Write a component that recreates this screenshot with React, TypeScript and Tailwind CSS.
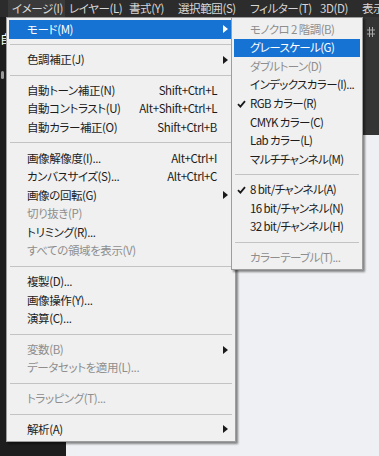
import React from "react";

type Item =
  | "sep"
  | {
      label: string;
      shortcut?: string;
      sub?: boolean;
      disabled?: boolean;
      active?: boolean;
      checked?: boolean;
    };

const mainItems: Item[] = [
  { label: "モード(M)", sub: true, active: true },
  "sep",
  { label: "色調補正(J)", sub: true },
  "sep",
  { label: "自動トーン補正(N)", shortcut: "Shift+Ctrl+L" },
  { label: "自動コントラスト(U)", shortcut: "Alt+Shift+Ctrl+L" },
  { label: "自動カラー補正(O)", shortcut: "Shift+Ctrl+B" },
  "sep",
  { label: "画像解像度(I)...", shortcut: "Alt+Ctrl+I" },
  { label: "カンバスサイズ(S)...", shortcut: "Alt+Ctrl+C" },
  { label: "画像の回転(G)", sub: true },
  { label: "切り抜き(P)", disabled: true },
  { label: "トリミング(R)..." },
  { label: "すべての領域を表示(V)", disabled: true },
  "sep",
  { label: "複製(D)..." },
  { label: "画像操作(Y)..." },
  { label: "演算(C)..." },
  "sep",
  { label: "変数(B)", sub: true, disabled: true },
  { label: "データセットを適用(L)...", disabled: true },
  "sep",
  { label: "トラッピング(T)...", disabled: true },
  "sep",
  { label: "解析(A)", sub: true },
];

const modeItems: Item[] = [
  { label: "モノクロ 2 階調(B)", disabled: true },
  { label: "グレースケール(G)", active: true },
  { label: "ダブルトーン(D)", disabled: true },
  { label: "インデックスカラー(I)..." },
  { label: "RGB カラー(R)", checked: true },
  { label: "CMYK カラー(C)" },
  { label: "Lab カラー(L)" },
  { label: "マルチチャンネル(M)" },
  "sep",
  { label: "8 bit/チャンネル(A)", checked: true },
  { label: "16 bit/チャンネル(N)" },
  { label: "32 bit/チャンネル(H)" },
  "sep",
  { label: "カラーテーブル(T)...", disabled: true },
];

const menuBar = [
  { label: "イメージ(I)", w: "w-[57px]", open: true },
  { label: "レイヤー(L)", w: "w-[60px]" },
  { label: "書式(Y)", w: "w-[49px]" },
  { label: "選択範囲(S)", w: "w-[72px]" },
  { label: "フィルター(T)", w: "w-[70px]" },
  { label: "3D(D)", w: "w-[42px]" },
  { label: "表示", w: "w-[30px]" },
];

const Arrow = ({ light }: { light?: boolean }) => (
  <svg width="5" height="8" viewBox="0 0 5 8">
    <polygon points="0,0 5,4 0,8" fill={light ? "#ffffff" : "#1a1a1a"} />
  </svg>
);

const Check = () => (
  <svg width="9" height="8" viewBox="0 0 9 8">
    <polyline points="1,4.2 3.4,6.6 8,1.2" fill="none" stroke="#1a1a1a" strokeWidth="1.8" />
  </svg>
);

const Separator = () => (
  <div className="h-[12px] mx-[3px] flex items-center">
    <div className="h-px w-full bg-[#c3c3c3]" />
  </div>
);

const textColor = (it: { disabled?: boolean; active?: boolean }) =>
  it.active ? "text-white" : it.disabled ? "text-[#8e8e8e]" : "text-[#1c1c1c]";

export default function App() {
  return (
    <div className="relative w-[379px] h-[456px] overflow-hidden text-[11.5px] leading-none tracking-[-0.4px] font-['Noto_Sans_CJK_JP',sans-serif] [font-feature-settings:'palt']">
      {/* menu bar */}
      <div className="h-[17px] bg-[#2c2c2c] flex pl-[8px] text-[#d6d6d6]">
        {menuBar.map((m) => (
          <div
            key={m.label}
            className={`${m.w} shrink-0 h-full flex items-center pl-[4px] whitespace-nowrap overflow-hidden ${m.open ? "bg-[#3a3a3a]" : ""}`}
          >
            {m.label}
          </div>
        ))}
      </div>

      {/* workspace behind the menus */}
      <div className="flex h-[439px]">
        <div className="w-[66px] bg-[#1d1d1d] text-white pt-[16px] text-[12px]">
          <div className="h-[14px] w-[6px] overflow-hidden">自</div>
          <div className="mt-[24px] ml-[1px] w-[3px] h-[8px] rounded-full bg-[#9a9a9a]" />
        </div>
        <div className="flex-1 flex flex-col">
          <div className="h-[118px] bg-[#343434] flex justify-end pr-[4px] pt-[10px]">
            <svg width="8" height="10" viewBox="0 0 8 10">
              <path d="M2.5 0v10M5.5 0v10M0 3h8M0 7h8" stroke="#a8a8a8" strokeWidth="1" />
            </svg>
          </div>
          <div className="flex-1 bg-[#eef0f3]" />
        </div>
      </div>

      {/* image menu */}
      <div className="absolute left-[6px] top-[17px] w-[230px] bg-[#f0f0f0] border border-[#9d9d9d] py-[2px] shadow-[2px_2px_2px_rgba(0,0,0,0.45)]">
        {mainItems.map((it, i) =>
          it === "sep" ? (
            <Separator key={i} />
          ) : (
            <div
              key={i}
              className={`h-[18.6px] mx-[2px] flex items-center pl-[18px] ${it.active ? "bg-[#1673d4]" : ""} ${textColor(it)}`}
            >
              <span className="flex-1 whitespace-nowrap">{it.label}</span>
              {it.shortcut && <span className="whitespace-nowrap pl-[4px]">{it.shortcut}</span>}
              <span className="w-[16px] h-full flex items-center pl-[6px]">
                {it.sub && <Arrow light={it.active} />}
              </span>
            </div>
          )
        )}
      </div>

      {/* mode submenu */}
      <div className="absolute left-[231px] top-[17px] w-[132px] bg-[#f0f0f0] border border-[#9d9d9d] py-[2px] shadow-[2px_2px_2px_rgba(0,0,0,0.45)] tracking-[-0.6px]">
        {modeItems.map((it, i) =>
          it === "sep" ? (
            <Separator key={i} />
          ) : (
            <div
              key={i}
              className={`h-[18.6px] mx-[2px] flex items-center ${it.active ? "bg-[#1673d4]" : ""} ${textColor(it)}`}
            >
              <span className="w-[16px] h-full flex items-center pl-[3px]">{it.checked && <Check />}</span>
              <span className="whitespace-nowrap">{it.label}</span>
            </div>
          )
        )}
      </div>
    </div>
  );
}
